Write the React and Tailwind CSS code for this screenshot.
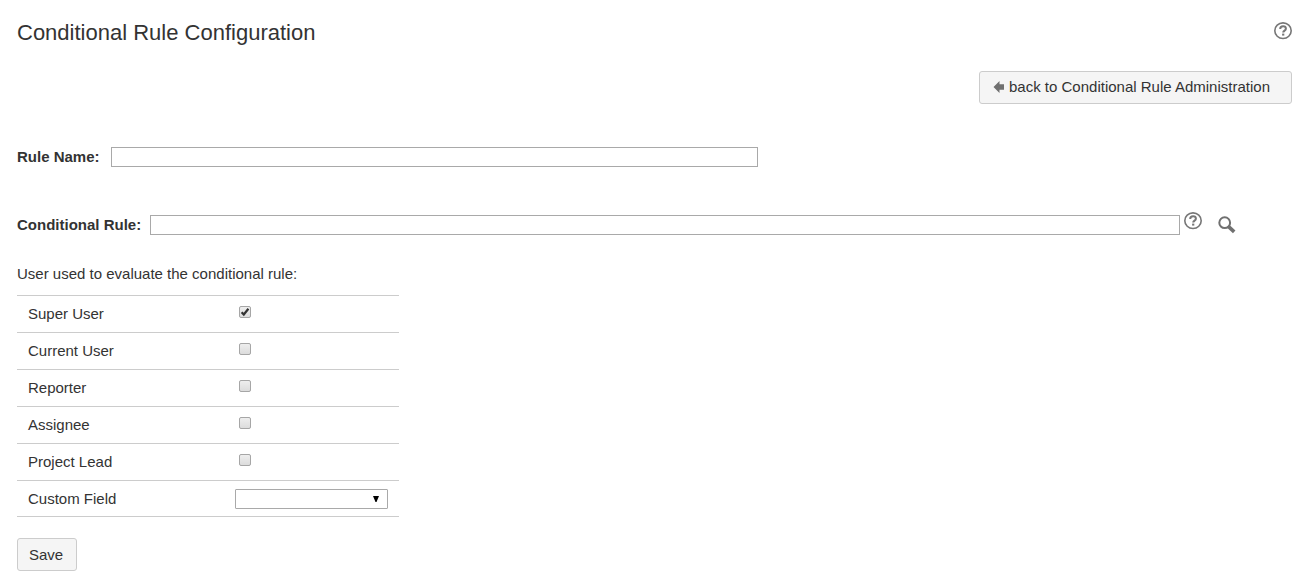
import React, { useState } from "react";

const userOptions = ["Super User", "Current User", "Reporter", "Assignee", "Project Lead"];

const HelpIcon = () => (
  <svg width="18" height="18" viewBox="0 0 18 18" fill="none" stroke="#777777">
    <ellipse cx="9" cy="8.7" rx="8.2" ry="7.8" strokeWidth="1.6" />
    <path d="M6.2 6.9C6.2 5.2 7.4 4.3 9.1 4.3s2.8 1 2.8 2.4c0 1.9-2.7 2-2.7 3.9" strokeWidth="2" />
    <path d="M8.1 12.6h2.2" strokeWidth="2" />
  </svg>
);

const SearchIcon = () => (
  <svg width="18" height="18" viewBox="0 0 18 18" fill="none" stroke="#707070">
    <circle cx="6.7" cy="6.7" r="5.4" strokeWidth="2" />
    <path d="M10.6 10.6l5.6 5.3" strokeWidth="3.6" />
  </svg>
);

const ArrowLeftIcon = () => (
  <svg width="11" height="12" viewBox="0 0 11 12" fill="#707070">
    <path d="M0.5 6L6.5 0v3.2H11v5.6H6.5V12z" />
  </svg>
);

const Checkbox = ({ id, checked, onChange }) => (
  <span className="relative ml-1 block h-3 w-3">
    <input
      id={id}
      type="checkbox"
      checked={checked}
      onChange={onChange}
      className="block h-3 w-3 appearance-none rounded-[2px] border border-[#a6a6a6] bg-linear-to-b from-[#eeeeee] to-[#dcdcdc]"
    />
    {checked && (
      <svg className="pointer-events-none absolute inset-0" width="12" height="12" viewBox="0 0 12 12" fill="none">
        <path d="M2.6 6.2l2.2 2.3 4.6-5.7" stroke="#333333" strokeWidth="2.2" />
      </svg>
    )}
  </span>
);

const App = () => {
  const [ruleName, setRuleName] = useState("");
  const [rule, setRule] = useState("");
  const [customField, setCustomField] = useState("");
  const [selected, setSelected] = useState(["Super User"]);

  const toggle = (name) => {
    setSelected(selected.includes(name) ? selected.filter((n) => n !== name) : [...selected, name]);
  };

  return (
    <div className="bg-white pt-[21px] pr-4 pb-1 pl-[17px] font-['Liberation_Sans',Arial,sans-serif] text-[15px] leading-5 text-[#333333]">
      <header className="flex items-start justify-between">
        <h1 className="text-[22px] leading-6">Conditional Rule Configuration</h1>
        <button type="button" aria-label="Help" className="mt-px">
          <HelpIcon />
        </button>
      </header>

      <div className="mt-[26px] flex justify-end">
        <button
          type="button"
          className="flex h-[33px] min-w-[313px] items-center gap-[5px] rounded-[3px] border border-[#cccccc] bg-[#f5f5f5] pr-3 pb-0.5 pl-[13px]"
        >
          <ArrowLeftIcon />
          back to Conditional Rule Administration
        </button>
      </div>

      <form onSubmit={(e) => e.preventDefault()}>
        <div className="mt-[43px] flex max-w-[741px] items-center gap-[11px]">
          <label htmlFor="rule-name" className="font-bold">Rule Name:</label>
          <input
            id="rule-name"
            type="text"
            value={ruleName}
            onChange={(e) => setRuleName(e.target.value)}
            className="h-5 min-w-0 flex-1 border border-[#a9a9a9] px-1"
          />
        </div>

        <div className="mt-[45px] flex items-center pr-14">
          <label htmlFor="conditional-rule" className="mr-[9px] font-bold">Conditional Rule:</label>
          <input
            id="conditional-rule"
            type="text"
            value={rule}
            onChange={(e) => setRule(e.target.value)}
            className="h-5 min-w-0 flex-1 border border-[#a9a9a9] px-1"
          />
          <button type="button" aria-label="Rule help" className="mr-4 mb-[7px] ml-1">
            <HelpIcon />
          </button>
          <button type="button" aria-label="Search">
            <SearchIcon />
          </button>
        </div>

        <p className="mt-[27px]">User used to evaluate the conditional rule:</p>

        <table className="mt-[11px] w-[382px] border-collapse border-b border-[#cccccc]">
          <tbody>
            {userOptions.map((name) => (
              <tr key={name} className="border-t border-[#cccccc]">
                <td className="py-2 pl-[11px]">
                  <label htmlFor={name}>{name}</label>
                </td>
                <td className="w-[164px] pt-2 pb-3 align-middle">
                  <Checkbox id={name} checked={selected.includes(name)} onChange={() => toggle(name)} />
                </td>
              </tr>
            ))}
            <tr className="border-t border-[#cccccc]">
              <td className="pt-2 pb-[7px] pl-[11px]">
                <label htmlFor="custom-field">Custom Field</label>
              </td>
              <td className="pt-2 pr-[11px] pb-[7px]">
                <div className="relative">
                  <select
                    id="custom-field"
                    value={customField}
                    onChange={(e) => setCustomField(e.target.value)}
                    className="block h-5 w-full appearance-none rounded-[1px] border border-[#a9a9a9] bg-white px-1"
                  >
                    <option value=""></option>
                  </select>
                  <svg className="pointer-events-none absolute top-[7px] right-2" width="7" height="6" viewBox="0 0 7 6">
                    <path d="M0 0h6L3.5 6h-1z" fill="#000000" />
                  </svg>
                </div>
              </td>
            </tr>
          </tbody>
        </table>

        <button
          type="submit"
          className="mt-[21px] h-[33px] min-w-[60px] rounded-[3px] border border-[#cccccc] bg-[#f5f5f5] px-[11px] text-left"
        >
          Save
        </button>
      </form>
    </div>
  );
};

export default App;
